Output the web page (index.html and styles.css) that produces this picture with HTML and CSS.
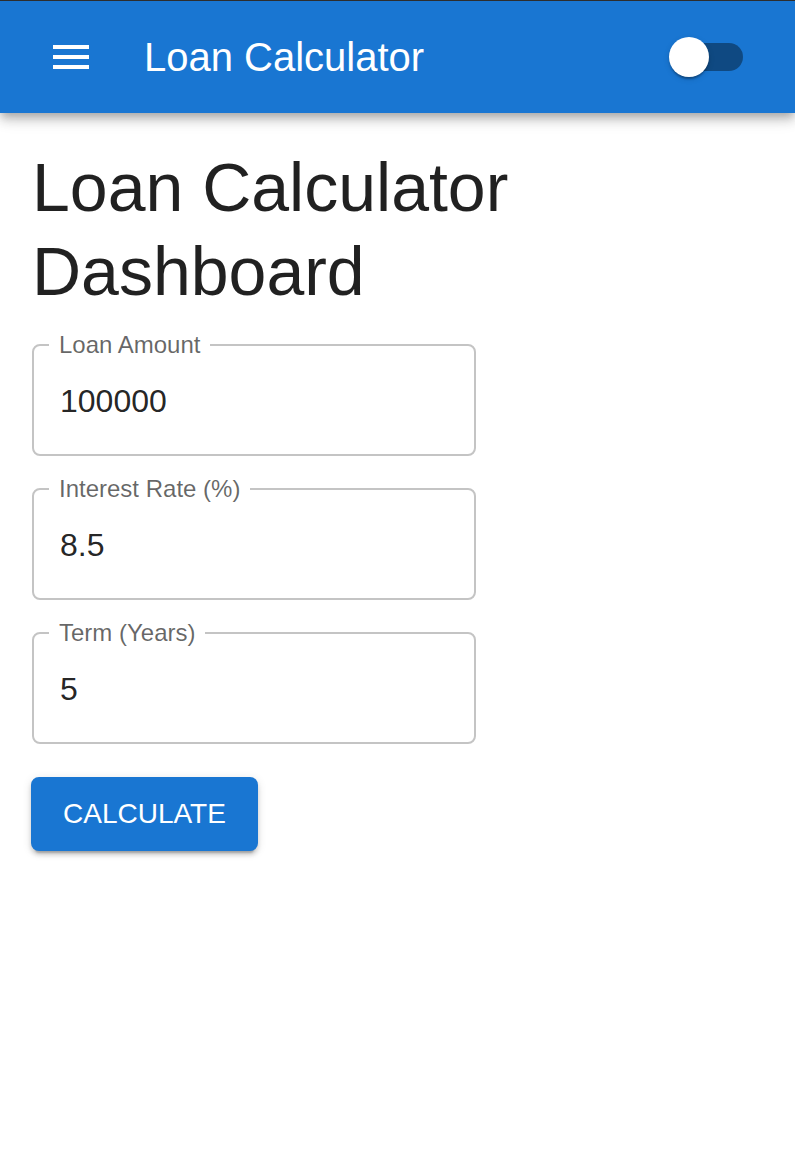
FILE: index.html
```html
<!DOCTYPE html>
<html lang="en">
<head>
<meta charset="utf-8">
<title>Loan Calculator</title>
<link rel="stylesheet" href="styles.css">
</head>
<body>
<header class="appbar">
  <div class="toolbar">
    <button class="menu-btn" aria-label="menu">
      <svg class="menu-icon" viewBox="0 0 24 24" width="48" height="48"><path d="M3 18h18v-2H3v2zm0-5h18v-2H3v2zm0-7v2h18V6H3z" fill="#fff"/></svg>
    </button>
    <h1 class="app-title">Loan Calculator</h1>
    <div class="switch">
      <span class="switch-track"></span>
      <span class="switch-thumb"></span>
    </div>
  </div>
</header>
<main class="container">
  <h2 class="page-title">Loan Calculator Dashboard</h2>
  <form class="form">
    <div class="field">
      <label class="field-label">Loan Amount</label>
      <input class="field-input" type="text" value="100000">
    </div>
    <div class="field">
      <label class="field-label">Interest Rate (%)</label>
      <input class="field-input" type="text" value="8.5">
    </div>
    <div class="field">
      <label class="field-label">Term (Years)</label>
      <input class="field-input" type="text" value="5">
    </div>
    <div class="actions">
      <button class="btn" type="button">CALCULATE</button>
    </div>
  </form>
</main>
</body>
</html>
```
FILE: styles.css
```css
* { box-sizing: border-box; }
html, body {
  margin: 0;
  padding: 0;
  background: #fff;
  font-family: "Liberation Sans", Arial, sans-serif;
  color: rgba(0, 0, 0, 0.87);
}
.appbar {
  background: #1976d2;
  border-top: 1px solid #2d2d2d;
  box-shadow: 0 4px 8px -2px rgba(0,0,0,.2), 0 8px 10px 0 rgba(0,0,0,.14), 0 2px 20px 0 rgba(0,0,0,.12);
  position: relative;
  z-index: 2;
}
.toolbar {
  height: 112px;
  display: flex;
  align-items: center;
  padding: 0 52px 0 47px;
}
.menu-btn {
  background: none;
  border: 0;
  padding: 0;
  width: 48px;
  height: 48px;
  display: flex;
  cursor: pointer;
}
.menu-icon { display: block; }
.app-title {
  margin: 0 0 0 49px;
  font-size: 40px;
  font-weight: 400;
  line-height: 1.6;
  color: #fff;
  flex: 1;
}
.switch {
  position: relative;
  width: 74px;
  height: 40px;
}
.switch-track {
  position: absolute;
  left: 6px;
  top: 6px;
  width: 68px;
  height: 28px;
  border-radius: 14px;
  background: rgba(0, 0, 0, 0.38);
}
.switch-thumb {
  position: absolute;
  left: 0;
  top: 0;
  width: 40px;
  height: 40px;
  border-radius: 50%;
  background: #fff;
  box-shadow: 0 4px 2px -2px rgba(0,0,0,.2), 0 2px 2px 0 rgba(0,0,0,.14), 0 2px 6px 0 rgba(0,0,0,.12);
}
.container {
  padding: 32px 32px;
}
.page-title {
  margin: 0;
  font-size: 68px;
  font-weight: 400;
  line-height: 84px;
  color: rgba(0, 0, 0, 0.87);
  max-width: 560px;
}
.form {
  margin-top: 31px;
  display: flex;
  flex-direction: column;
  gap: 32px;
  width: 444px;
}
.field {
  position: relative;
  height: 112px;
  border: 2px solid #c4c4c4;
  border-radius: 8px;
  display: flex;
  align-items: center;
  padding: 0 26px;
}
.field-label {
  position: absolute;
  top: -15px;
  left: 15px;
  padding: 0 10px;
  background: #fff;
  font-size: 24px;
  line-height: 28px;
  color: rgba(0, 0, 0, 0.6);
}
.field-input {
  border: 0;
  outline: none;
  background: transparent;
  width: 100%;
  font-family: inherit;
  font-size: 32px;
  color: rgba(0, 0, 0, 0.87);
  padding: 0;
  margin-top: 2px;
}
.actions { display: flex; margin-top: 1px; }
.btn {
  height: 74px;
  padding: 0 32px;
  margin-left: -1px;
  border: 0;
  border-radius: 8px;
  background: #1976d2;
  color: #fff;
  font-family: inherit;
  font-size: 28px;
  font-weight: 400;
  box-shadow: 0 6px 2px -4px rgba(0,0,0,.2), 0 4px 4px 0 rgba(0,0,0,.14), 0 2px 10px 0 rgba(0,0,0,.12);
  cursor: pointer;
}
```
